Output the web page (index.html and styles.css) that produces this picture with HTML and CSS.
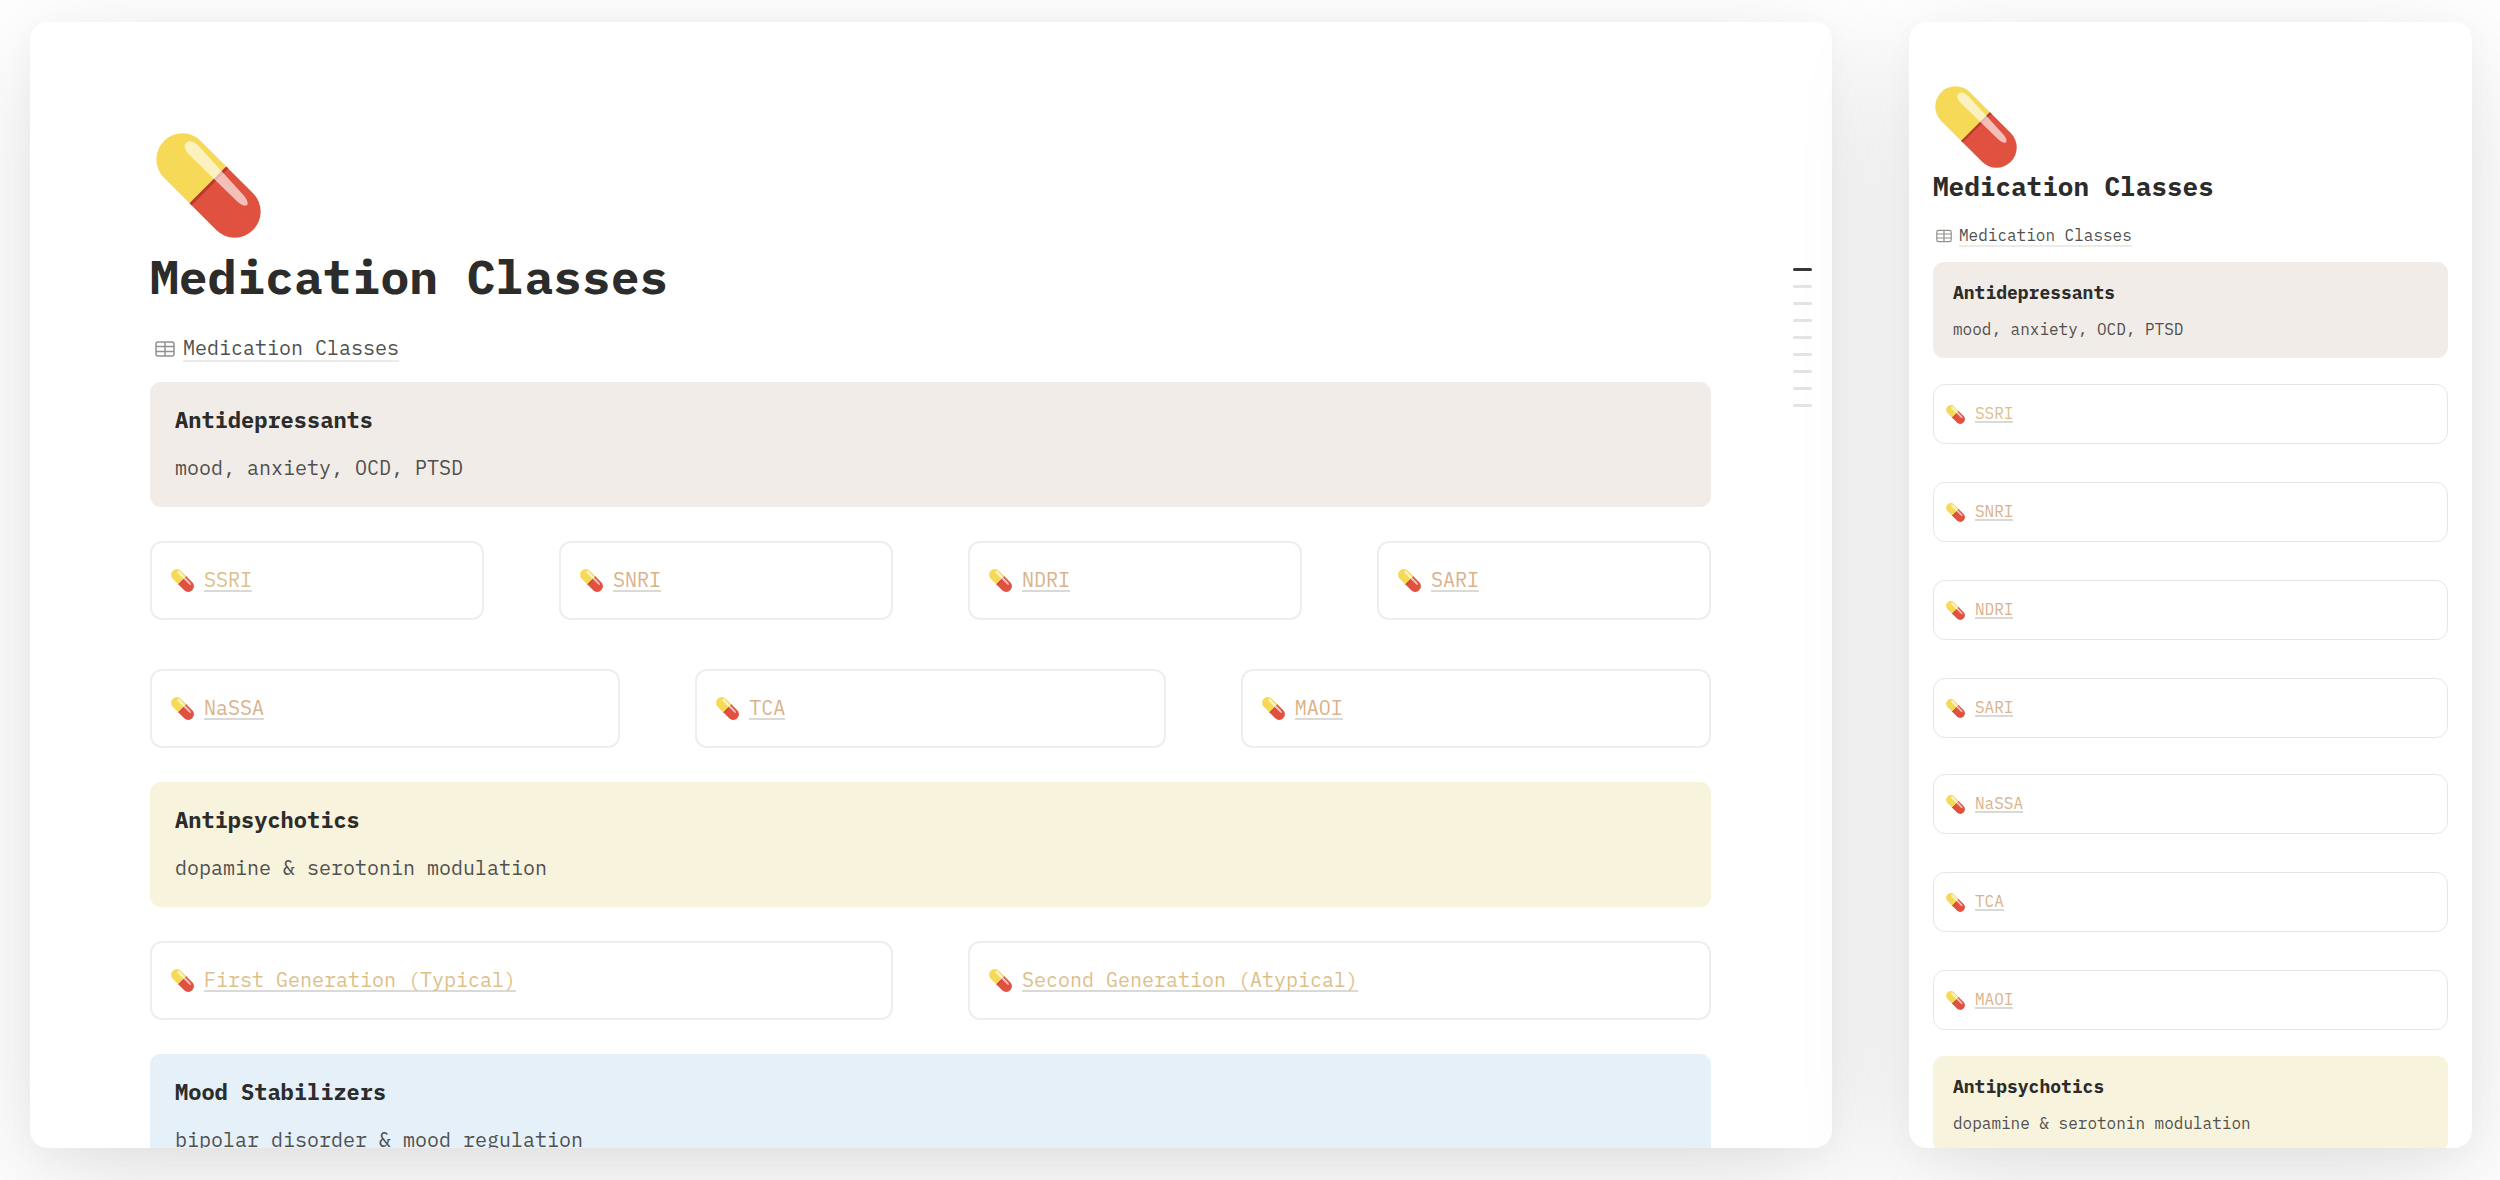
FILE: index.html
```html
<!DOCTYPE html>
<html lang="en">
<head>
  <meta charset="UTF-8">
  <meta name="viewport" content="width=device-width, initial-scale=1.0">
  <title>Medication Classes</title>
  <link rel="stylesheet" href="styles.css">
</head>
<body>
  <!-- Shared icons -->
  <svg class="sprite" aria-hidden="true">
    <defs>
      <clipPath id="capsule">
        <rect x="-63" y="-26" width="126" height="52" rx="26"/>
      </clipPath>
      <symbol id="pill" viewBox="0 0 105 105">
        <g transform="translate(52.5 52.5) rotate(45)">
          <g clip-path="url(#capsule)">
            <rect x="-64" y="-33" width="64" height="66" fill="#f6d957"/>
            <rect x="0" y="-33" width="64" height="66" fill="#e05140"/>
            <rect x="-1" y="-33" width="3" height="66" fill="#b8382b"/>
          </g>
          <path d="M-46-14C-46-19-41-21-35-21L32-18C44-17 44-10 32-9L-35-8C-41-8-46-10-46-14Z" fill="#fff" fill-opacity=".63"/>
        </g>
      </symbol>
      <symbol id="table" viewBox="0 0 20 16">
        <rect x="1" y="1" width="18" height="14" rx="2" fill="none" stroke="#91918e" stroke-width="1.5"/>
        <path d="M1 5.5H19M1 10.5H19M10 1V15" stroke="#91918e" stroke-width="1.5"/>
      </symbol>
    </defs>
  </svg>

  <!-- Desktop view -->
  <main class="window desktop">
    <svg class="page-icon"><use href="#pill"/></svg>
    <h1>Medication Classes</h1>
    <div class="database">
      <svg><use href="#table"/></svg>
      <a href="#">Medication Classes</a>
    </div>

    <section class="callout brown">
      <h2>Antidepressants</h2>
      <p>mood, anxiety, OCD, PTSD</p>
    </section>
    <div class="cards four">
      <div class="card yellow-link"><svg><use href="#pill"/></svg><a href="#">SSRI</a></div>
      <div class="card"><svg><use href="#pill"/></svg><a href="#">SNRI</a></div>
      <div class="card"><svg><use href="#pill"/></svg><a href="#">NDRI</a></div>
      <div class="card"><svg><use href="#pill"/></svg><a href="#">SARI</a></div>
    </div>
    <div class="cards three">
      <div class="card"><svg><use href="#pill"/></svg><a href="#">NaSSA</a></div>
      <div class="card"><svg><use href="#pill"/></svg><a href="#">TCA</a></div>
      <div class="card"><svg><use href="#pill"/></svg><a href="#">MAOI</a></div>
    </div>

    <section class="callout yellow">
      <h2>Antipsychotics</h2>
      <p>dopamine &amp; serotonin modulation</p>
    </section>
    <div class="cards two">
      <div class="card yellow-link"><svg><use href="#pill"/></svg><a href="#">First Generation (Typical)</a></div>
      <div class="card yellow-link"><svg><use href="#pill"/></svg><a href="#">Second Generation (Atypical)</a></div>
    </div>

    <section class="callout blue">
      <h2>Mood Stabilizers</h2>
      <p>bipolar disorder &amp; mood regulation</p>
    </section>

    <!-- Section markers -->
    <div class="outline">
      <span class="active"></span>
      <span></span>
      <span></span>
      <span></span>
      <span></span>
      <span></span>
      <span></span>
      <span></span>
      <span></span>
    </div>
  </main>

  <!-- Mobile view -->
  <aside class="window mobile">
    <svg class="page-icon"><use href="#pill"/></svg>
    <h1>Medication Classes</h1>
    <div class="database">
      <svg><use href="#table"/></svg>
      <a href="#">Medication Classes</a>
    </div>

    <section class="callout brown">
      <h2>Antidepressants</h2>
      <p>mood, anxiety, OCD, PTSD</p>
    </section>
    <div class="cards">
      <div class="card yellow-link"><svg><use href="#pill"/></svg><a href="#">SSRI</a></div>
      <div class="card"><svg><use href="#pill"/></svg><a href="#">SNRI</a></div>
      <div class="card"><svg><use href="#pill"/></svg><a href="#">NDRI</a></div>
      <div class="card"><svg><use href="#pill"/></svg><a href="#">SARI</a></div>
    </div>
    <div class="cards">
      <div class="card"><svg><use href="#pill"/></svg><a href="#">NaSSA</a></div>
      <div class="card"><svg><use href="#pill"/></svg><a href="#">TCA</a></div>
      <div class="card"><svg><use href="#pill"/></svg><a href="#">MAOI</a></div>
    </div>

    <section class="callout yellow">
      <h2>Antipsychotics</h2>
      <p>dopamine &amp; serotonin modulation</p>
    </section>
  </aside>
</body>
</html>
```

FILE: styles.css
```css
/* General Reset */
* {
  margin: 0;
  padding: 0;
  box-sizing: border-box;
}

body {
  font-family: 'IBM Plex Mono', 'Liberation Mono', monospace;
  background-color: #ffffff;
  color: #2c2c2b;
  height: 100vh;
  padding: 22px 28px 32px 30px;
  display: grid;
  grid-template-columns: 1802fr 563fr;
  gap: 77px;
  overflow: hidden;
}

.sprite {
  position: absolute;
  width: 0;
  height: 0;
}

/* Windows */
.window {
  position: relative;
  min-width: 0;
  min-height: 0;
  overflow: hidden;
  background-color: #ffffff;
  border-radius: 18px;
  box-shadow: 0 30px 120px rgba(0, 0, 0, 0.12), 0 8px 30px rgba(0, 0, 0, 0.03);
}

.desktop {
  padding: 111px 121px 0 120px;
  font-size: 20px;
  line-height: 30px;
}

.mobile {
  padding: 64px 24px 0 24px;
  font-size: 16px;
  line-height: 24px;
}

/* Page header */
.page-icon {
  display: block;
  width: 105px;
  height: 105px;
  margin-left: 6px;
}

h1 {
  font-size: 48px;
  line-height: 58px;
  margin-top: 9px;
}

.database {
  display: flex;
  align-items: center;
  gap: 8px;
  padding-left: 5px;
  margin: 31px 0 20px;
}

.database svg {
  width: 20px;
  height: 16px;
}

.database a {
  color: #50504e;
  text-decoration: none;
  line-height: 24px;
  border-bottom: 2px solid #ebebea;
}

/* Callouts */
.callout {
  height: 125px;
  padding: 23px 25px;
  border-radius: 11px;
  color: #50504e;
}

.callout h2 {
  font-size: 22px;
  line-height: 30px;
  color: #2c2c2b;
  margin-bottom: 18px;
}

.brown {
  background-color: #f2ece8;
}

.yellow {
  background-color: #f8f3dd;
}

.blue {
  background-color: #e5f0f9;
}

/* Cards */
.cards {
  display: grid;
  gap: 75px;
  margin: 34px 0;
}

.cards + .cards {
  margin-top: 49px;
}

.four {
  grid-template-columns: repeat(4, 1fr);
}

.three {
  grid-template-columns: repeat(3, 1fr);
}

.two {
  grid-template-columns: repeat(2, 1fr);
}

.card {
  display: flex;
  align-items: center;
  gap: 10px;
  height: 79px;
  padding: 0 19px;
  border: 2px solid #eeeeed;
  border-radius: 12px;
}

.card svg {
  width: 23px;
  height: 23px;
}

.card a {
  color: #d9b38c;
  text-decoration: none;
  line-height: 20px;
  border-bottom: 2px solid #d9d9d7;
}

.yellow-link a {
  color: #dcc08a;
}

/* Section markers on the right edge */
.outline {
  position: absolute;
  top: 246px;
  right: 20px;
  display: flex;
  flex-direction: column;
  gap: 14px;
}

.outline span {
  width: 19px;
  height: 3px;
  border-radius: 2px;
  background-color: #e4e4e2;
}

.outline .active {
  background-color: #373735;
}

/* Mobile sizes */
.mobile .page-icon {
  width: 82px;
  height: 82px;
  margin-left: 2px;
}

.mobile h1 {
  font-size: 26px;
  line-height: 32px;
  margin-top: 2px;
}

.mobile .database {
  gap: 7px;
  padding-left: 3px;
  margin: 23px 0 15px;
}

.mobile .database svg {
  width: 16px;
  height: 14px;
}

.mobile .database a {
  line-height: 20px;
}

.mobile .callout {
  height: 96px;
  padding: 19px 20px;
}

.mobile .callout h2 {
  font-size: 18px;
  line-height: 24px;
  margin-bottom: 12px;
}

.mobile .cards {
  gap: 38px;
  margin: 26px 0;
}

.mobile .cards + .cards {
  margin-top: 36px;
}

.mobile .card {
  height: 60px;
  padding: 0 12px;
  border: 1px solid #e6e6e5;
}

.mobile .card svg {
  width: 19px;
  height: 19px;
}

.mobile .card a {
  line-height: 16px;
}
```
